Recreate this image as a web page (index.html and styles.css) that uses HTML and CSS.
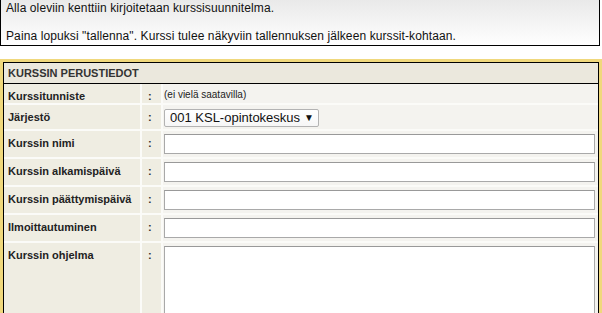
FILE: index.html
```html
<!DOCTYPE html>
<html lang="fi">
<head>
  <meta charset="UTF-8" />
  <title>Kurssisuunnitelma</title>
  <link rel="stylesheet" href="styles.css">
</head>
<body>

<div class="info">
  <p>Alla oleviin kenttiin kirjoitetaan kurssisuunnitelma.</p>
  <p>Paina lopuksi "tallenna". Kurssi tulee näkyviin tallennuksen jälkeen kurssit-kohtaan.</p>
</div>

<div class="panel">
  <div class="panel-inner">
    <div class="panel-head">KURSSIN PERUSTIEDOT</div>

    <div class="form">
      <div class="label">Kurssitunniste</div>
      <div class="colon">:</div>
      <div class="field small-text">(ei vielä saatavilla)</div>

      <div class="label">Järjestö</div>
      <div class="colon">:</div>
      <div class="field select-field">
        <label class="select">
          <select>
            <option>001 KSL-opintokeskus</option>
          </select>
          <span class="arrow">▼</span>
        </label>
      </div>

      <div class="label">Kurssin nimi</div>
      <div class="colon">:</div>
      <div class="field"><input type="text" class="text-input"></div>

      <div class="label">Kurssin alkamispäivä</div>
      <div class="colon">:</div>
      <div class="field"><input type="text" class="text-input"></div>

      <div class="label">Kurssin päättymispäivä</div>
      <div class="colon">:</div>
      <div class="field"><input type="text" class="text-input"></div>

      <div class="label">Ilmoittautuminen</div>
      <div class="colon">:</div>
      <div class="field"><input type="text" class="text-input"></div>

      <div class="label">Kurssin ohjelma</div>
      <div class="colon">:</div>
      <div class="field"><textarea class="text-area"></textarea></div>
    </div>
  </div>
</div>

</body>
</html>
```

FILE: styles.css
```css
body {
  margin: 0;
  font-family: "Liberation Sans", Arial, sans-serif;
  color: #111;
}

.info {
  width: 588px;
  padding: 1px 5px 2px 5px;
  border: 1px solid #000;
  border-top: none;
  background: linear-gradient(#e9e9e9, #ffffff);
  font-size: 12px;
  line-height: 14px;
  letter-spacing: 0.1px;
}

.info p {
  margin: 0 0 14px 0;
}

.info p:last-child {
  margin-bottom: 0;
}

.panel {
  margin-top: 13px;
  width: 596px;
  border: 3px solid #f0d87c;
}

.panel-inner {
  border: 1px solid #000;
  background: #f9f9f6;
}

.panel-head {
  height: 20px;
  line-height: 20px;
  padding-left: 4px;
  background: #ebe8dd;
  border-bottom: 1px solid #000;
  font-size: 11px;
  font-weight: bold;
  color: #333;
}

.form {
  display: grid;
  grid-template-columns: 136px 19px 1fr;
  column-gap: 2px;
  row-gap: 2px;
  background: #fbfbf8;
}

.label {
  background: #efede2;
  padding: 5px 0 0 4px;
  font-size: 11px;
  line-height: 14px;
  font-weight: bold;
  color: #222;
}

.colon {
  background: #efede2;
  padding: 5px 0 0 6px;
  font-size: 11px;
  line-height: 14px;
  font-weight: bold;
  color: #333;
}

.field {
  background: #f4f3ef;
  padding: 3px 2px 3px 1px;
}

.small-text {
  font-size: 10px;
  line-height: 13px;
  padding-top: 4px;
  padding-bottom: 2px;
  color: #222;
}

.select-field {
  padding-bottom: 2px;
}

.select {
  display: inline-flex;
  align-items: center;
  height: 16px;
  width: 153px;
  border: 1px solid #b3b3b3;
  border-radius: 2px;
  background: linear-gradient(#ffffff, #f6f6f6);
}

.select select {
  appearance: none;
  border: none;
  background: transparent;
  font-family: "Liberation Sans", Arial, sans-serif;
  font-size: 13px;
  color: #111;
  padding: 0 0 0 5px;
  margin: 0;
  flex: 1;
  outline: none;
}

.arrow {
  font-size: 10px;
  padding-right: 4px;
  color: #111;
}

.text-input {
  display: block;
  box-sizing: border-box;
  width: 431px;
  height: 20px;
  margin: 0;
  border: 1px solid #a9a9a9;
  border-top-color: #999;
  background: #fff;
}

.text-area {
  display: block;
  box-sizing: border-box;
  width: 431px;
  height: 90px;
  margin: 0;
  border: 1px solid #a9a9a9;
  border-top-color: #999;
  background: #fff;
  resize: none;
}
```
